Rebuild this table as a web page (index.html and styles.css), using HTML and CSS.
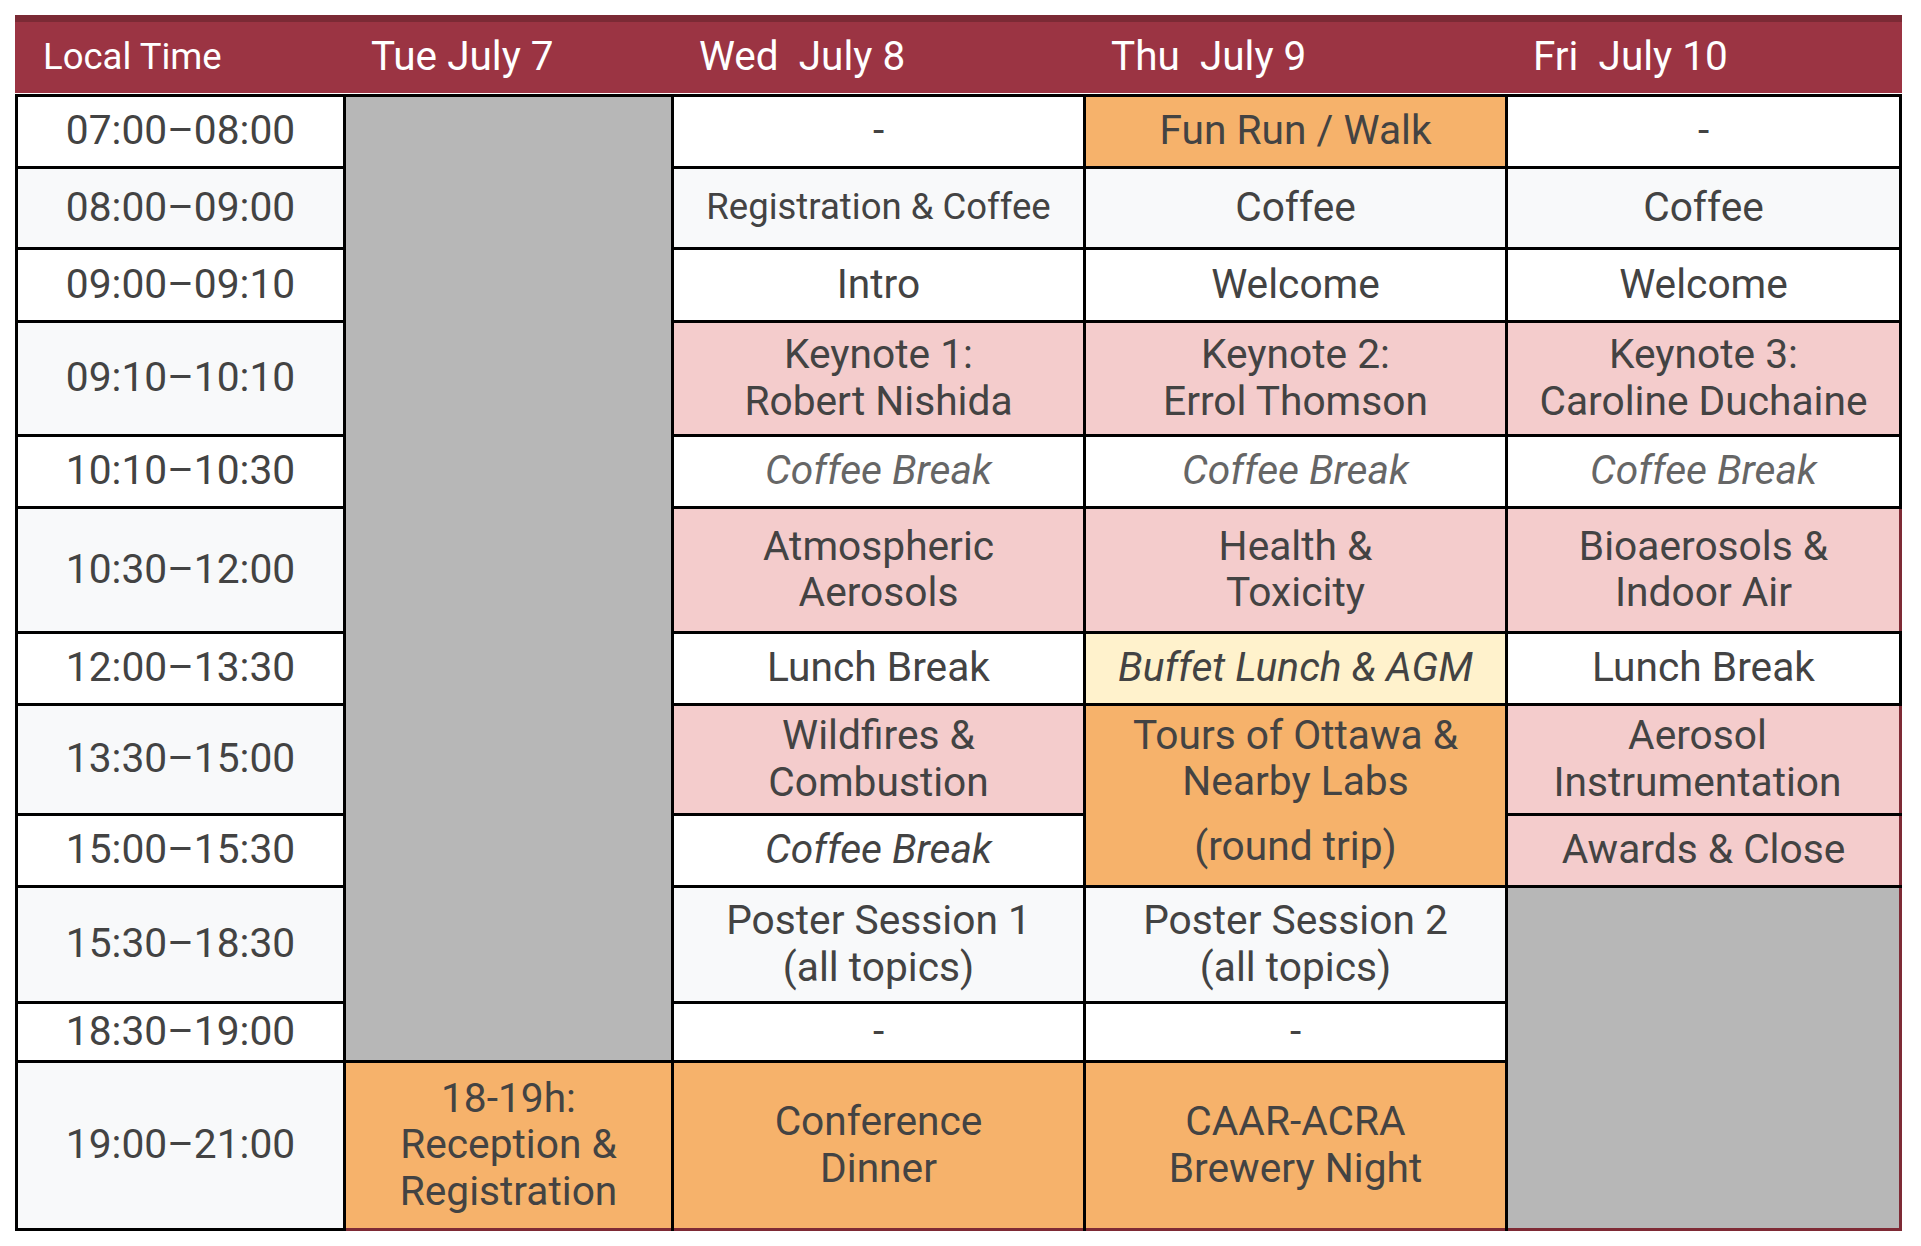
FILE: index.html
```html
<!DOCTYPE html>
<html lang="en">
<head>
<meta charset="utf-8">
<title>Conference Schedule</title>
<link rel="stylesheet" href="styles.css">
</head>
<body>
<div class="page">
  <div class="head">
    <div class="hcell hsmall">Local Time</div>
    <div class="hcell">Tue July 7</div>
    <div class="hcell">Wed&nbsp; July 8</div>
    <div class="hcell">Thu&nbsp; July 9</div>
    <div class="hcell">Fri&nbsp; July 10</div>
  </div>
  <div class="grid">
    <!-- row 1 -->
    <div class="c">07:00–08:00</div>
    <div class="c gray tue-span"></div>
    <div class="c">-</div>
    <div class="c orange">Fun Run / Walk</div>
    <div class="c">-</div>
    <!-- row 2 -->
    <div class="c light">08:00–09:00</div>
    <div class="c light small">Registration &amp; Coffee</div>
    <div class="c light">Coffee</div>
    <div class="c light">Coffee</div>
    <!-- row 3 -->
    <div class="c">09:00–09:10</div>
    <div class="c">Intro</div>
    <div class="c">Welcome</div>
    <div class="c">Welcome</div>
    <!-- row 4 -->
    <div class="c light">09:10–10:10</div>
    <div class="c pink">Keynote 1:<br>Robert Nishida</div>
    <div class="c pink">Keynote 2:<br>Errol Thomson</div>
    <div class="c pink">Keynote 3:<br>Caroline Duchaine</div>
    <!-- row 5 -->
    <div class="c">10:10–10:30</div>
    <div class="c it muted">Coffee Break</div>
    <div class="c it muted">Coffee Break</div>
    <div class="c it muted">Coffee Break</div>
    <!-- row 6 -->
    <div class="c light">10:30–12:00</div>
    <div class="c pink">Atmospheric<br>Aerosols</div>
    <div class="c pink">Health &amp;<br>Toxicity</div>
    <div class="c pink red-right">Bioaerosols &amp;<br>Indoor Air</div>
    <!-- row 7 -->
    <div class="c">12:00–13:30</div>
    <div class="c">Lunch Break</div>
    <div class="c yellow it">Buffet Lunch &amp; AGM</div>
    <div class="c">Lunch Break</div>
    <!-- row 8 -->
    <div class="c light">13:30–15:00</div>
    <div class="c pink">Wildfires &amp;<br>Combustion</div>
    <div class="c orange tours"><div>Tours of Ottawa &amp;<br>Nearby Labs<div class="sub">(round trip)</div></div></div>
    <div class="c pink red-right shift-left">Aerosol<br>Instrumentation</div>
    <!-- row 9 -->
    <div class="c">15:00–15:30</div>
    <div class="c it">Coffee Break</div>
    <div class="c pink red-right">Awards &amp; Close</div>
    <!-- row 10 -->
    <div class="c light">15:30–18:30</div>
    <div class="c light">Poster Session 1<br>(all topics)</div>
    <div class="c light">Poster Session 2<br>(all topics)</div>
    <div class="c gray fri-span"></div>
    <!-- row 11 -->
    <div class="c">18:30–19:00</div>
    <div class="c">-</div>
    <div class="c">-</div>
    <!-- row 12 -->
    <div class="c light">19:00–21:00</div>
    <div class="c orange red-bottom">18-19h:<br>Reception &amp;<br>Registration</div>
    <div class="c orange red-bottom">Conference<br>Dinner</div>
    <div class="c orange red-bottom">CAAR-ACRA<br>Brewery Night</div>
  </div>
</div>
</body>
</html>
```
FILE: styles.css
```css
* {
  box-sizing: border-box;
}

body {
  margin: 0;
  background: #ffffff;
  font-family: Roboto, "Liberation Sans", Arial, sans-serif;
}

.page {
  padding: 15px 0 0 15px;
  width: 1902px;
}

.head {
  display: grid;
  grid-template-columns: 325px 325px 409px 419px 391px;
  column-gap: 3px;
  padding: 0 3px;
  width: 1887px;
  height: 78px;
  border-top: 7px solid #7b2a35;
  background: #9b3443;
  margin-bottom: 1px;
}

.hcell {
  display: flex;
  align-items: center;
  padding: 0 0 3px 25px;
  color: #ffffff;
  font-size: 40.5px;
  white-space: nowrap;
}

.hsmall {
  font-size: 36.5px;
}

.grid {
  display: grid;
  grid-template-columns: 325px 325px 409px 419px 391px;
  grid-template-rows: 69px 78px 70px 111px 69px 122px 69px 107px 69px 113px 56px 165px;
  gap: 3px;
  padding: 3px;
  width: 1887px;
  background: #000000;
}

.c {
  display: flex;
  align-items: center;
  justify-content: center;
  text-align: center;
  padding-bottom: 2px;
  background: #ffffff;
  color: #434343;
  font-size: 40.7px;
  line-height: 1.14;
}

.light {
  background: #f8f9fa;
}

.gray {
  background: #b7b7b7;
}

.pink {
  background: #f4cccc;
}

.orange {
  background: #f6b26b;
}

.yellow {
  background: #fff2cc;
}

.small {
  font-size: 36.5px;
}

.it {
  font-style: italic;
}

.muted {
  color: #666666;
}

.tue-span {
  grid-row: span 11;
}

.fri-span {
  grid-row: span 3;
  box-shadow: 3px 0 0 #7e2a35, 0 3px 0 #7e2a35, 3px 3px 0 #7e2a35;
}

.tours {
  grid-row: span 2;
  padding-bottom: 10px;
}

.sub {
  margin-top: 18px;
}

.shift-left {
  padding-right: 12px;
}

.red-right {
  box-shadow: 3px 0 0 #7e2a35;
}

.red-bottom {
  box-shadow: 0 3px 0 #7e2a35;
}
```
